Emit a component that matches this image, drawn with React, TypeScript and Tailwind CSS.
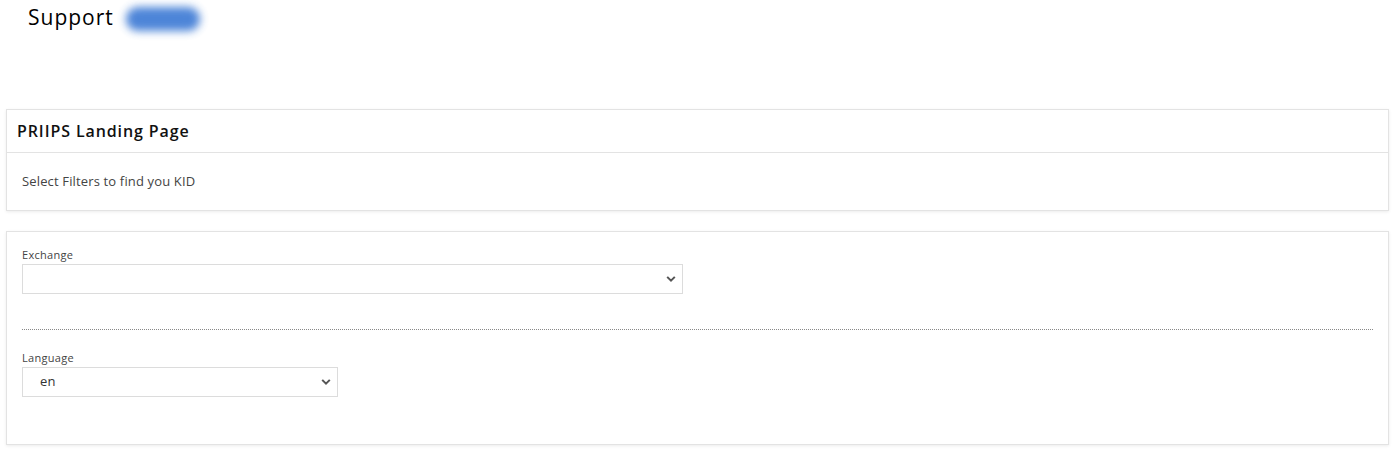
import React from 'react';

function Chevron() {
  return (
    <svg width="10" height="7" viewBox="0 0 10 7" className="pointer-events-none absolute top-1/2 -translate-y-1/2 right-[6px]">
      <path d="M1.2 1.4 L5 5.2 L8.8 1.4" fill="none" stroke="#555" strokeWidth="2" />
    </svg>
  );
}

function SelectBox({ width, value }: { width: string; value?: string }) {
  return (
    <div className={`relative h-[30px] ${width} border border-[#dcdcdc] bg-white`}>
      <div className="flex h-full items-center pl-[17px] text-[13px] tracking-[0.3px] text-[#333]">{value}</div>
      <Chevron />
    </div>
  );
}

export default function App() {
  return (
    <div className="min-h-screen bg-white font-['Open_Sans',sans-serif] text-[#222]">
      <div className="flex h-[34px] items-center pl-[28px]">
        <h1 className="text-[21px] leading-none tracking-[1px] text-black pt-[1px]">Support</h1>
        <div className="ml-[8px] mt-[4px] flex h-[34px] w-[82px] items-center justify-center">
          <div className="h-[24px] w-[74px] rounded-full bg-[#3a78d4] opacity-90 blur-[4px]" />
        </div>
      </div>

      <div className="mx-[6px] mt-[75px] border border-[#e3e3e3] shadow-[0_1px_3px_rgba(0,0,0,0.08)]">
        <div className="flex h-[43px] items-center border-b border-[#e3e3e3] px-[10px]">
          <h2 className="text-[16px] font-semibold tracking-[0.9px] text-[#111]">PRIIPS Landing Page</h2>
        </div>
        <div className="flex h-[57px] items-center px-[15px] text-[13px] tracking-[0.15px] text-[#444]">
          Select Filters to find you KID
        </div>
      </div>

      <div className="mx-[6px] mt-[20px] border border-[#e3e3e3] px-[15px] pt-[16px] pb-[47px] shadow-[0_1px_3px_rgba(0,0,0,0.08)]">
        <label className="block text-[11px] leading-[14px] tracking-[0.3px] text-[#444]">Exchange</label>
        <div className="mt-[2px]">
          <SelectBox width="w-[661px]" />
        </div>
        <div className="mt-[35px] border-t border-dotted border-[#888]" />
        <label className="mt-[21px] block text-[11px] leading-[14px] tracking-[0.3px] text-[#444]">Language</label>
        <div className="mt-[2px]">
          <SelectBox width="w-[316px]" value="en" />
        </div>
      </div>
    </div>
  );
}
